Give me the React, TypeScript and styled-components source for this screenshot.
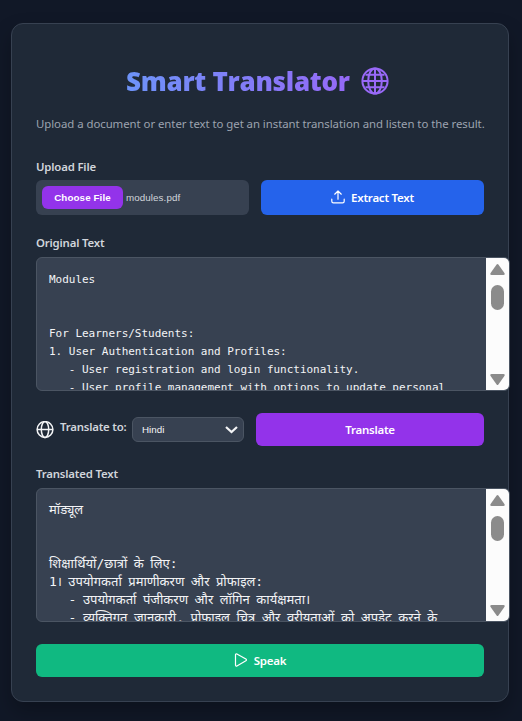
import React from 'react';
import styled, { createGlobalStyle } from 'styled-components';

const GlobalStyle = createGlobalStyle`
  * { box-sizing: border-box; }
  body {
    margin: 0;
    background: #111827;
    color: #d1d5db;
    font-family: "Noto Sans", "Open Sans", sans-serif;
    font-size: 12px;
    overflow: hidden;
  }
  h1, p { margin: 0; }
`;

const Page = styled.main`
  width: 522px;
  height: 721px;
  padding: 23px 13px 19px 11px;
  overflow: hidden;
`;

const Card = styled.section`
  width: 498px;
  height: 679px;
  padding: 39px 24px 24px;
  display: flex;
  flex-direction: column;
  background: #1f2937;
  border: 1px solid #374151;
  border-radius: 12px;
  box-shadow: 0 10px 20px rgba(0, 0, 0, 0.25);
`;

const Heading = styled.header`
  display: flex;
  align-items: center;
  height: 36px;
  padding-left: 90px;
  gap: 11px;
`;

const Title = styled.h1`
  width: 224px;
  font-family: "Open Sans", "Noto Sans", sans-serif;
  font-size: 26px;
  line-height: 36px;
  font-weight: 800;
  letter-spacing: -0.27px;
  white-space: nowrap;
  color: transparent;
  background: linear-gradient(90deg, #6d93f8, #9569f7);
  background-clip: text;
`;

const Subtitle = styled.p`
  margin-top: 15px;
  height: 21px;
  line-height: 20px;
  font-size: 11.4px;
  letter-spacing: -0.05px;
  color: #9ca3af;
  white-space: nowrap;
`;

const Label = styled.label<{ $top: number }>`
  margin-top: ${(p) => p.$top}px;
  height: 18px;
  line-height: 17px;
  font-size: 11.4px;
  font-weight: 600;
  letter-spacing: -0.18px;
  white-space: nowrap;
`;

const Row = styled.div<{ $top: number }>`
  display: flex;
  align-items: center;
  gap: 12px;
  margin-top: ${(p) => p.$top}px;
`;

const FileField = styled.div`
  display: flex;
  align-items: center;
  gap: 3px;
  width: 213px;
  height: 35px;
  padding: 6px;
  background: #374151;
  border-radius: 6px;
  font: 9.8px "Liberation Sans", sans-serif;
  letter-spacing: 0.08px;
`;

const ChooseButton = styled.button`
  width: 81px;
  height: 23px;
  padding: 0;
  border: 0;
  border-radius: 6px;
  background: #9333ea;
  color: #fff;
  font: bold 9.8px "Liberation Sans", sans-serif;
  letter-spacing: 0.1px;
`;

const Button = styled.button<{ $color: string; $height: number }>`
  display: flex;
  flex: 1 0 auto;
  align-items: center;
  justify-content: center;
  gap: 6px;
  height: ${(p) => p.$height}px;
  padding: 0 0 1px;
  border: 0;
  border-radius: 6px;
  background: ${(p) => p.$color};
  color: #fff;
  font: 600 11.5px "Noto Sans", "Open Sans", sans-serif;
  letter-spacing: -0.25px;
`;

const SpeakRow = styled.div`
  display: flex;
  margin-top: 22px;
`;

const TextBox = styled.div`
  display: flex;
  flex: none;
  width: 474px;
  height: 134px;
  margin-top: 5px;
  background: #374151;
  border: 1px solid #4b5563;
  border-radius: 6px;
  overflow: hidden;
`;

const TextContent = styled.pre<{ $hindi?: boolean }>`
  flex: 1;
  height: 132px;
  margin: 0;
  padding: ${(p) => (p.$hindi ? 12 : 13)}px 0 0 12px;
  overflow: hidden;
  color: #f3f4f6;
  font-family: "DejaVu Sans Mono", "Noto Sans Devanagari", monospace;
  font-size: ${(p) => (p.$hindi ? 13 : 11)}px;
  word-spacing: ${(p) => (p.$hindi ? -1.3 : 0)}px;
  letter-spacing: ${(p) => (p.$hindi ? 0 : -0.02)}px;
  line-height: 18px;
`;

const ScrollTrack = styled.div`
  display: flex;
  flex-direction: column;
  align-items: center;
  width: 23px;
  height: 132px;
  padding: 6px 0 5px;
  background: #fcfcfc;
`;

const Thumb = styled.div`
  width: 13px;
  height: 25px;
  margin: 10px 0 auto;
  border-radius: 7px;
  background: #8b8b8b;
`;

const LanguageGroup = styled.div`
  display: flex;
  align-items: center;
  width: 208px;
  height: 33px;
`;

const InlineLabel = styled.label`
  width: 72px;
  margin-left: 6px;
  padding-bottom: 5px;
  line-height: 18px;
  font-size: 11.4px;
  font-weight: 600;
  letter-spacing: -0.2px;
  white-space: nowrap;
`;

const Select = styled.div`
  display: flex;
  align-items: center;
  justify-content: space-between;
  width: 112px;
  height: 25px;
  padding: 0 5px 0 9px;
  border: 1px solid #4b5563;
  border-radius: 6px;
  background: #374151;
  color: #f3f4f6;
  font: 9.8px "Liberation Sans", sans-serif;
`;

const Globe = () => (
  <svg width="28" height="28" viewBox="0 0 28 28" fill="none" stroke="#9969f8" strokeWidth="2">
    <circle cx="14" cy="14" r="12.6" />
    <ellipse cx="14" cy="14" rx="6.8" ry="12.6" />
    <path d="M14 1.5v25M1.5 14h25M4.5 7.8h19M4.5 20.2h19" />
  </svg>
);

const SmallGlobe = () => (
  <svg width="18" height="18" viewBox="0 0 18 18" fill="none" stroke="#f3f4f6" strokeWidth="1.5">
    <circle cx="9" cy="8.5" r="7.9" />
    <ellipse cx="9" cy="8.5" rx="3.7" ry="7.9" />
    <path d="M1.1 8.5h15.8" />
  </svg>
);

const UploadIcon = () => (
  <svg width="14" height="14" viewBox="0 0 14 14" fill="none" stroke="#fff" strokeWidth="1.2" strokeLinecap="round" strokeLinejoin="round">
    <path d="M7 9.2V1M3.7 4.2 7 1l3.3 3.2M.8 9.2v2c0 1 .6 1.6 1.6 1.6h9.2c1 0 1.6-.6 1.6-1.6v-2" />
  </svg>
);

const PlayIcon = () => (
  <svg width="14" height="14" viewBox="0 0 14 14" fill="none" stroke="#fff" strokeWidth="1.2" strokeLinejoin="round">
    <path d="M1.5 1.8c0-.8.7-1.2 1.4-.8l9 5.1c.7.4.7 1.3 0 1.7l-9 5.1c-.7.4-1.4 0-1.4-.8Z" />
  </svg>
);

const Chevron = () => (
  <svg width="13" height="8" viewBox="0 0 13 8" fill="none" stroke="#f3f4f6" strokeWidth="2.2">
    <path d="m1 1 5.5 5L12 1" />
  </svg>
);

const Scrollbar = () => (
  <ScrollTrack>
    <svg width="15" height="11" viewBox="0 0 15 11" fill="#8b8b8b">
      <path d="M6.6.6Q7.5-.5 8.4.6l6 8.4q1 2-1 2H1.6q-2 0-1-2Z" />
    </svg>
    <Thumb />
    <svg width="15" height="11" viewBox="0 0 15 11" fill="#8b8b8b">
      <path d="M6.6 10.4q.9 1.1 1.8 0l6-8.4q1-2-1-2H1.6q-2 0-1 2Z" />
    </svg>
  </ScrollTrack>
);

const original = `Modules


For Learners/Students:
1. User Authentication and Profiles:
   - User registration and login functionality.
   - User profile management with options to update personal`;

const translated = `मॉड्यूल


शिक्षार्थियों/छात्रों के लिए:
1। उपयोगकर्ता प्रमाणीकरण और प्रोफाइल:
   - उपयोगकर्ता पंजीकरण और लॉगिन कार्यक्षमता।
   - व्यक्तिगत जानकारी, प्रोफाइल चित्र और वरीयताओं को अपडेट करने के`;

export default function App() {
  return (
    <Page>
      <GlobalStyle />
      <Card>
        <Heading>
          <Title>Smart Translator</Title>
          <Globe />
        </Heading>
        <Subtitle>Upload a document or enter text to get an instant translation and listen to the result.</Subtitle>
        <Label $top={23}>Upload File</Label>
        <Row $top={4}>
          <FileField>
            <ChooseButton>Choose File</ChooseButton>
            <span>modules.pdf</span>
          </FileField>
          <Button $color="#2563eb" $height={35}>
            <UploadIcon />
            Extract Text
          </Button>
        </Row>
        <Label $top={19}>Original Text</Label>
        <TextBox>
          <TextContent>{original}</TextContent>
          <Scrollbar />
        </TextBox>
        <Row $top={22}>
          <LanguageGroup>
            <SmallGlobe />
            <InlineLabel>Translate to:</InlineLabel>
            <Select>
              <span>Hindi</span>
              <Chevron />
            </Select>
          </LanguageGroup>
          <Button $color="#9333ea" $height={33}>Translate</Button>
        </Row>
        <Label $top={19}>Translated Text</Label>
        <TextBox>
          <TextContent $hindi>{translated}</TextContent>
          <Scrollbar />
        </TextBox>
        <SpeakRow>
          <Button $color="#10b981" $height={33}>
            <PlayIcon />
            Speak
          </Button>
        </SpeakRow>
      </Card>
    </Page>
  );
}
